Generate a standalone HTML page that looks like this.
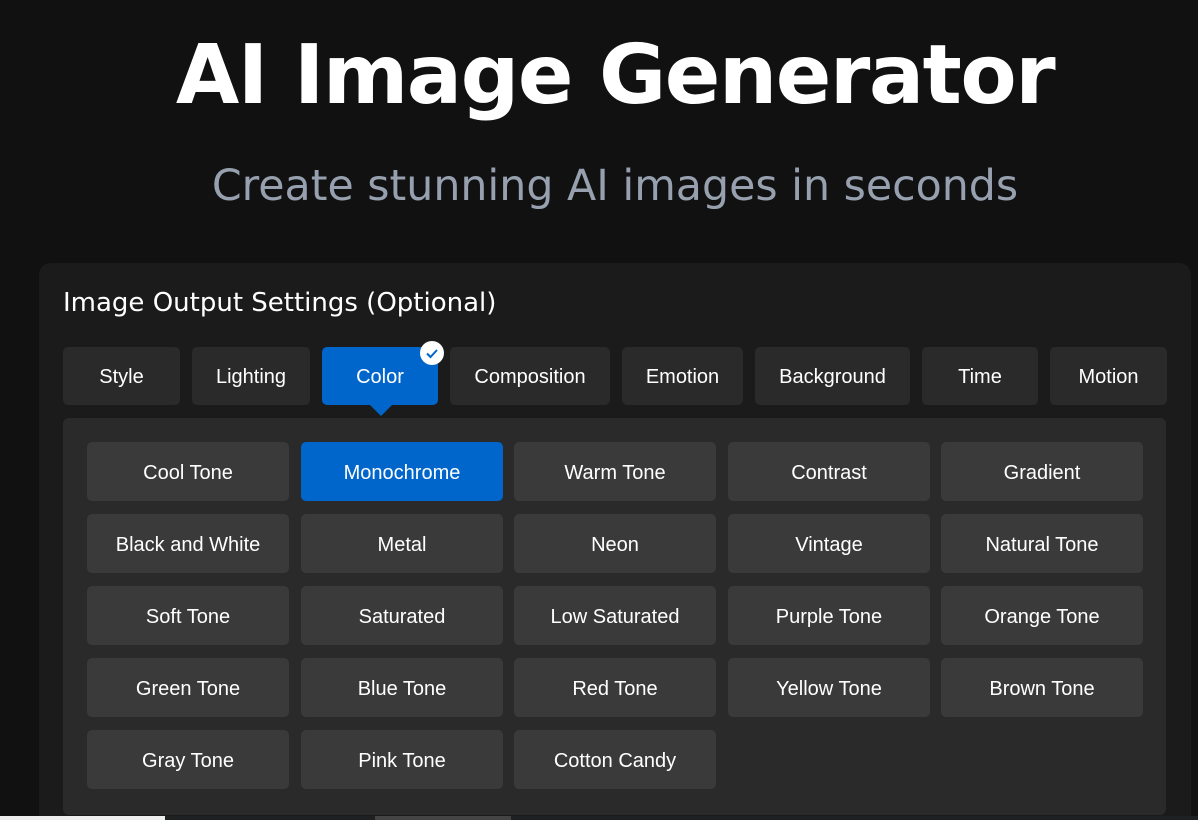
<!DOCTYPE html>
<html><head><style>
html,body{margin:0;width:1198px;height:820px;overflow:hidden}
body{background:#111;font-family:"Liberation Sans",sans-serif;color:#fff;position:relative}
h1{position:absolute;top:28px;left:0;width:1230px;text-align:center;margin:0;font-family:"DejaVu Sans","Liberation Sans",sans-serif;font-weight:bold;font-size:82px;letter-spacing:-1.5px}
.sub{position:absolute;top:161px;left:0;width:1230px;text-align:center;font-family:"DejaVu Sans",sans-serif;font-size:42.7px;color:#97a0ae}
.card{position:absolute;left:39px;top:263px;width:1152px;height:557px;background:#1b1b1b;border-radius:12px 12px 0 0}
.ct{position:absolute;left:63px;top:288px;font-family:"DejaVu Sans",sans-serif;font-size:26px}
.tab{position:absolute;top:347px;height:58px;padding-top:2px;box-sizing:border-box;background:#2a2a2a;border-radius:5px;display:flex;align-items:center;justify-content:center;font-size:20px}
.tab.on{background:#0066cc}
.panel{position:absolute;left:63px;top:418px;width:1103px;height:397px;background:#2a2a2a;border-radius:6px}
.b{position:absolute;width:202px;height:59px;padding-top:3px;box-sizing:border-box;background:#3a3a3a;border-radius:5px;display:flex;align-items:center;justify-content:center;font-size:20px}
.b.on{background:#0066cc}
</style></head><body>
<h1>AI Image Generator</h1>
<div class="sub">Create stunning AI images in seconds</div>
<div class="card"></div>
<div class="ct">Image Output Settings (Optional)</div>
<div class="tab" style="left:63px;width:117px">Style</div>
<div class="tab" style="left:192px;width:118px">Lighting</div>
<div class="tab on" style="left:322px;width:116px">Color</div>
<div style="position:absolute;left:370px;top:405px;width:0;height:0;border-left:11px solid transparent;border-right:11px solid transparent;border-top:11px solid #0066cc"></div>
<div style="position:absolute;left:420px;top:341px;width:24px;height:24px;border-radius:50%;background:#fff"><svg width="24" height="24"><path d="M7 12.5l3.5 3.5 6.5-7" fill="none" stroke="#0066cc" stroke-width="2"/></svg></div>
<div class="tab" style="left:450px;width:160px">Composition</div>
<div class="tab" style="left:622px;width:121px">Emotion</div>
<div class="tab" style="left:755px;width:155px">Background</div>
<div class="tab" style="left:922px;width:116px">Time</div>
<div class="tab" style="left:1050px;width:117px">Motion</div>
<div class="panel"></div>
<div class="b" style="left:87px;top:442px">Cool Tone</div>
<div class="b on" style="left:301px;top:442px">Monochrome</div>
<div class="b" style="left:514px;top:442px">Warm Tone</div>
<div class="b" style="left:728px;top:442px">Contrast</div>
<div class="b" style="left:941px;top:442px">Gradient</div>
<div class="b" style="left:87px;top:514px">Black and White</div>
<div class="b" style="left:301px;top:514px">Metal</div>
<div class="b" style="left:514px;top:514px">Neon</div>
<div class="b" style="left:728px;top:514px">Vintage</div>
<div class="b" style="left:941px;top:514px">Natural Tone</div>
<div class="b" style="left:87px;top:586px">Soft Tone</div>
<div class="b" style="left:301px;top:586px">Saturated</div>
<div class="b" style="left:514px;top:586px">Low Saturated</div>
<div class="b" style="left:728px;top:586px">Purple Tone</div>
<div class="b" style="left:941px;top:586px">Orange Tone</div>
<div class="b" style="left:87px;top:658px">Green Tone</div>
<div class="b" style="left:301px;top:658px">Blue Tone</div>
<div class="b" style="left:514px;top:658px">Red Tone</div>
<div class="b" style="left:728px;top:658px">Yellow Tone</div>
<div class="b" style="left:941px;top:658px">Brown Tone</div>
<div class="b" style="left:87px;top:730px">Gray Tone</div>
<div class="b" style="left:301px;top:730px">Pink Tone</div>
<div class="b" style="left:514px;top:730px">Cotton Candy</div>
<div style="position:absolute;left:0;top:816px;width:165px;height:4px;background:#eee"></div>
<div style="position:absolute;left:165px;top:816px;width:1033px;height:4px;background:#1e2022"></div>
<div style="position:absolute;left:375px;top:816px;width:136px;height:4px;background:#444"></div>
</body></html>
